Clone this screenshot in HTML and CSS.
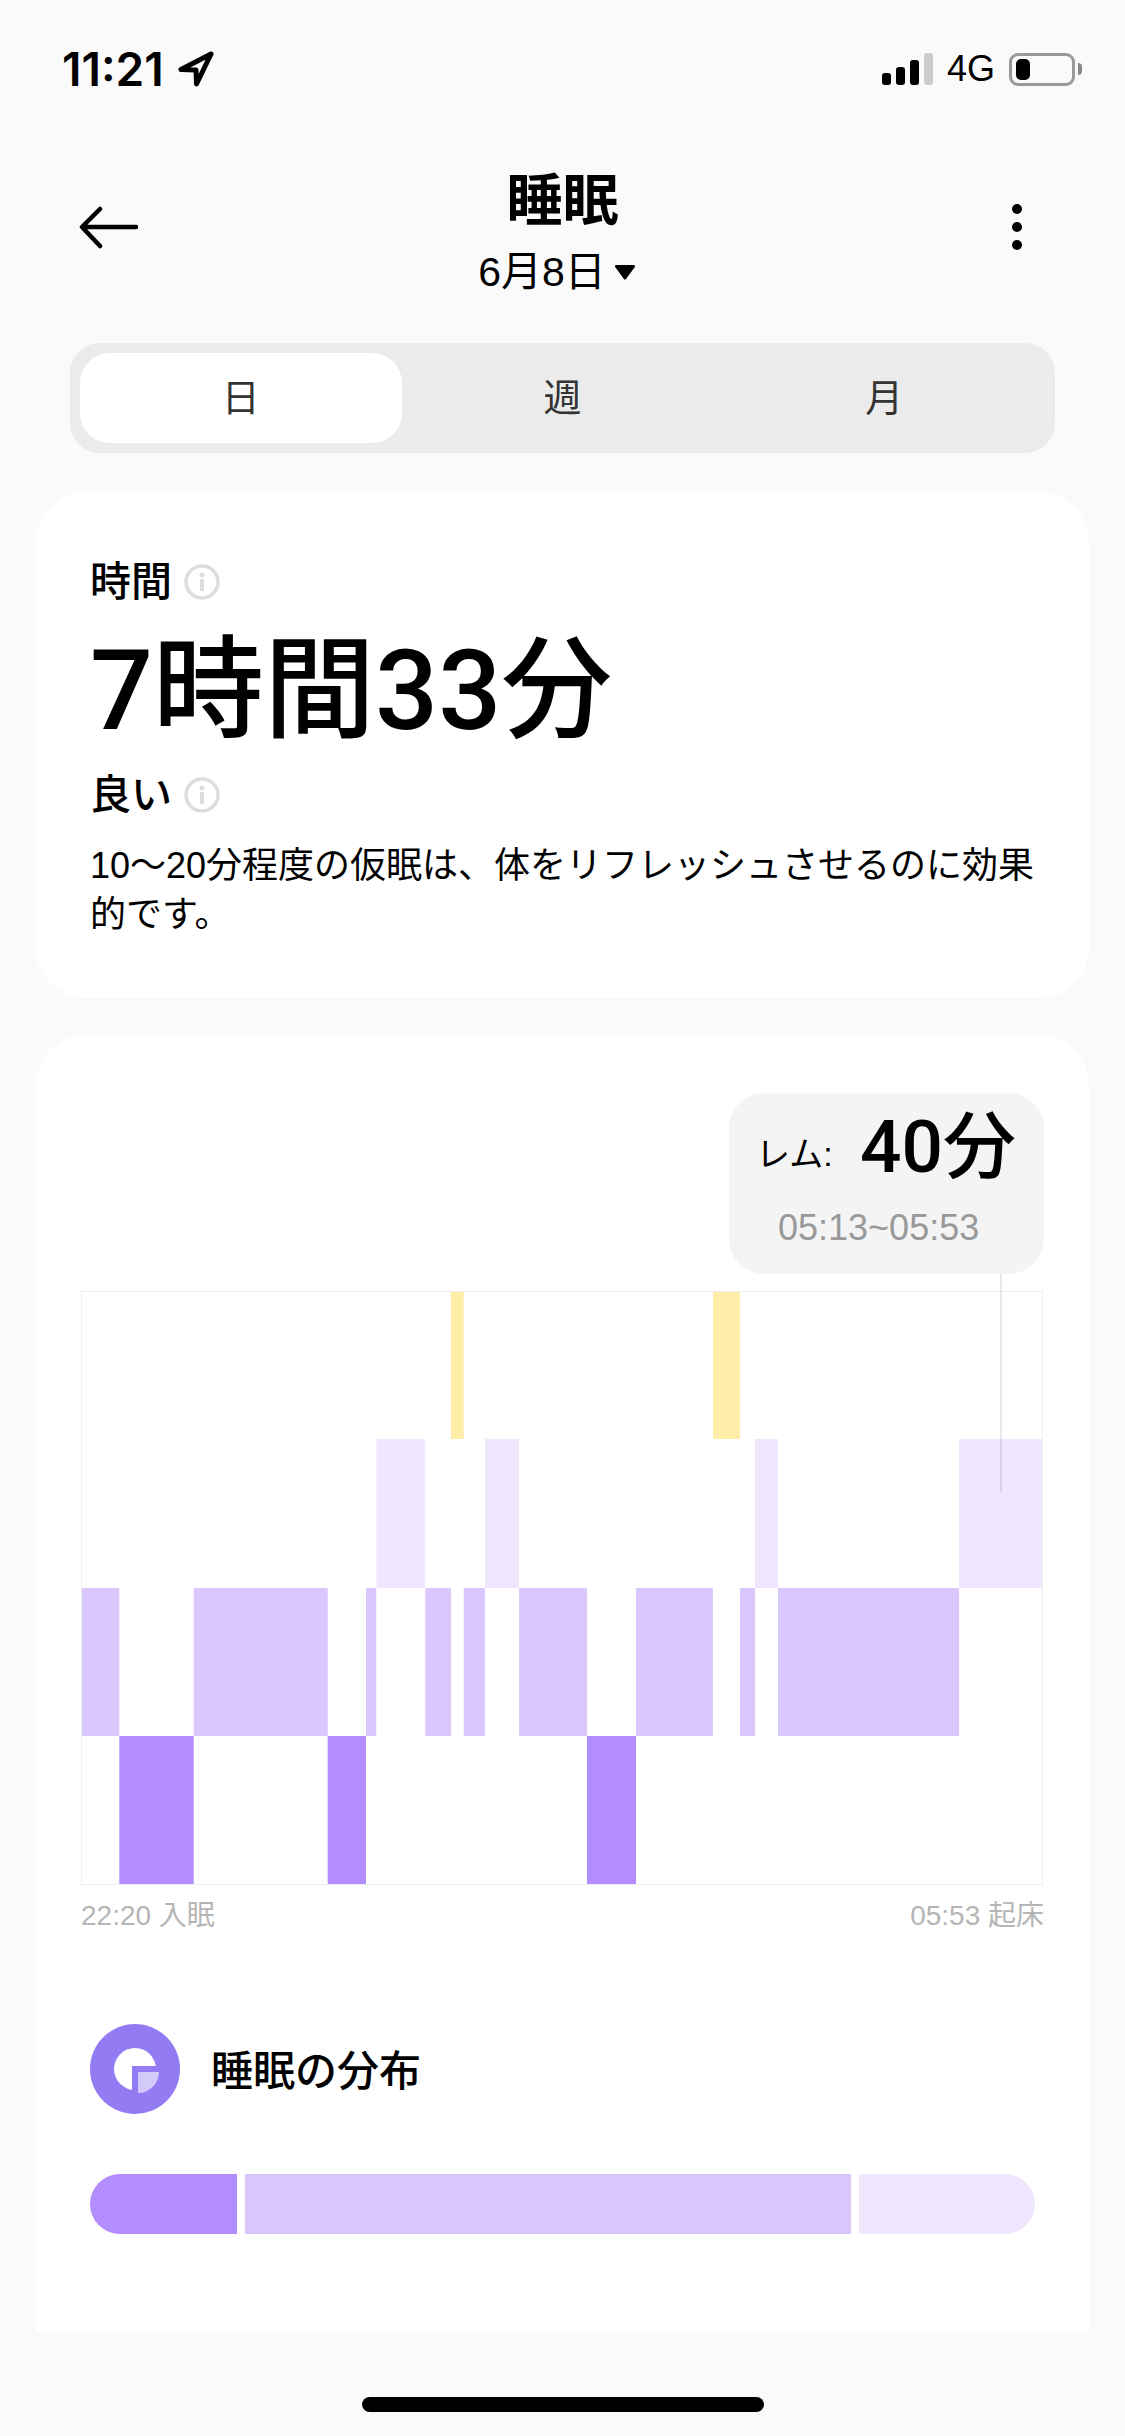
FILE: index.html
```html
<!DOCTYPE html>
<html lang="ja">
<head>
    <meta charset="UTF-8">
    <meta name="viewport" content="width=device-width, initial-scale=1.0">
    <title>睡眠</title>
    <link rel="stylesheet" href="styles.css">
</head>
<body>

    <div class="status-bar">
        <div class="status-left">
            <span class="clock">11:21</span>
            <svg class="location" width="38" height="38" viewBox="0 0 38 38">
                <path d="M34 4 L4 19.500 L19 20 L19.500 34 Z" fill="none" stroke="#000" stroke-width="5" stroke-linejoin="round"/>
            </svg>
        </div>
        <div class="status-right">
            <div class="signal">
                <span class="signal-bar bar-1"></span>
                <span class="signal-bar bar-2"></span>
                <span class="signal-bar bar-3"></span>
                <span class="signal-bar bar-4"></span>
            </div>
            <span class="network">4G</span>
            <div class="battery"><span class="battery-fill"></span></div>
            <span class="battery-cap"></span>
        </div>
    </div>

    <div class="nav">
        <svg class="nav-back" width="60" height="44" viewBox="0 0 60 44">
            <path d="M58 21 H5 M22 3 L4 21 L22 40" fill="none" stroke="#000" stroke-width="4.500" stroke-linecap="round" stroke-linejoin="round"/>
        </svg>
        <div class="nav-center">
            <h1>睡眠</h1>
            <div class="nav-date">
                <span>6月8日</span>
                <svg width="22" height="15" viewBox="0 0 20 14"><path d="M2 0 H18 Q20 0 19 2 L11 13 Q10 14 9 13 L1 2 Q0 0 2 0 Z" fill="#000"/></svg>
            </div>
        </div>
        <div class="nav-more">
            <span></span>
            <span></span>
            <span></span>
        </div>
    </div>

    <div class="tabs">
        <div class="tab active">日</div>
        <div class="tab">週</div>
        <div class="tab">月</div>
    </div>

    <div class="card summary">
        <div class="label-row">
            <span>時間</span>
            <svg class="info" width="36" height="36" viewBox="0 0 36 36">
                <circle cx="18" cy="18" r="16" fill="none" stroke="#ddd" stroke-width="3.500"/>
                <circle cx="18" cy="11" r="2.500" fill="#ddd"/>
                <rect x="16" y="15" width="4" height="12" fill="#ddd"/>
            </svg>
        </div>
        <div class="duration">7時間33分</div>
        <div class="label-row quality">
            <span>良い</span>
            <svg class="info" width="36" height="36" viewBox="0 0 36 36">
                <circle cx="18" cy="18" r="16" fill="none" stroke="#ddd" stroke-width="3.500"/>
                <circle cx="18" cy="11" r="2.500" fill="#ddd"/>
                <rect x="16" y="15" width="4" height="12" fill="#ddd"/>
            </svg>
        </div>
        <p class="advice">10～20分程度の仮眠は、体をリフレッシュさせるのに効果的です。</p>
    </div>

    <div class="card sleep-chart">
        <div class="tooltip-wrap">
            <div class="tooltip">
                <div class="tooltip-main">
                    <span class="tooltip-stage">レム:</span>
                    <span class="tooltip-value">40分</span>
                </div>
                <div class="tooltip-time">05:13~05:53</div>
            </div>
        </div>

        <svg class="hypnogram" width="962" height="594" viewBox="81 1291 962 594">
            <g fill="#ffeda8">
                <rect x="451" y="1291" width="12.700" height="148"/>
                <rect x="713" y="1291" width="27" height="148"/>
            </g>
            <g fill="#f0e7fe">
                <rect x="376.300" y="1439" width="49" height="149"/>
                <rect x="485" y="1439" width="34" height="149"/>
                <rect x="755" y="1439" width="23" height="149"/>
                <rect x="959" y="1439" width="84" height="149"/>
            </g>
            <g fill="#d9c7fe">
                <rect x="81" y="1588" width="38.300" height="148"/>
                <rect x="193.700" y="1588" width="134" height="148"/>
                <rect x="366" y="1588" width="10.300" height="148"/>
                <rect x="425.300" y="1588" width="25.700" height="148"/>
                <rect x="463.700" y="1588" width="21.300" height="148"/>
                <rect x="519" y="1588" width="68" height="148"/>
                <rect x="636" y="1588" width="77" height="148"/>
                <rect x="740" y="1588" width="15" height="148"/>
                <rect x="778" y="1588" width="181" height="148"/>
            </g>
            <g fill="#b38dfe">
                <rect x="119.300" y="1736" width="74.400" height="149"/>
                <rect x="327.700" y="1736" width="38.300" height="149"/>
                <rect x="587" y="1736" width="49" height="149"/>
            </g>
        </svg>

        <div class="chart-labels">
            <span>22:20 入眠</span>
            <span>05:53 起床</span>
        </div>

        <div class="section-head">
            <svg width="90" height="90" viewBox="0 0 90 90">
                <circle cx="45" cy="45" r="45" fill="#927bf3"/>
                <circle cx="45" cy="45" r="21" fill="#fff"/>
                <rect x="42" y="42" width="30" height="30" fill="#927bf3"/>
                <path d="M48 48 H69 A21 21 0 0 1 48 69 Z" fill="#d4cafa"/>
            </svg>
            <h2>睡眠の分布</h2>
        </div>

        <div class="stage-bar">
            <div class="stage stage-deep"></div>
            <div class="stage stage-mid"></div>
            <div class="stage stage-light"></div>
        </div>
    </div>

    <div class="home-indicator"></div>

</body>
</html>
```

FILE: styles.css
```css
body {
    font-family: 'Liberation Sans', 'Noto Sans CJK JP', sans-serif;
    margin: 0;
    padding: 0;
    background-color: #fafafa;
    color: #000;
}
.status-bar {
    height: 138px;
    box-sizing: border-box;
    padding: 0 43px 0 62px;
    display: flex;
    align-items: center;
    justify-content: space-between;
}
.status-left {
    display: flex;
    align-items: center;
    gap: 13px;
}
.clock {
    font-family: 'Inter', sans-serif;
    font-weight: 600;
    font-size: 46px;
}
.status-right {
    display: flex;
    align-items: center;
}
.signal {
    display: flex;
    align-items: flex-end;
    gap: 5px;
    height: 32px;
}
.signal-bar {
    width: 9px;
    background-color: #000;
    border-radius: 3px;
}
.bar-1 { height: 12px; }
.bar-2 { height: 18px; }
.bar-3 { height: 25px; }
.bar-4 { height: 32px; background-color: #ccc; }
.network {
    font-size: 36px;
    margin: 0 14px;
}
.battery {
    width: 66px;
    height: 33px;
    box-sizing: border-box;
    border: 3px solid #999;
    border-radius: 9px;
    padding: 3px 4px;
}
.battery-fill {
    display: block;
    width: 14px;
    height: 100%;
    background-color: #000;
    border-radius: 5px;
}
.battery-cap {
    width: 4px;
    height: 12px;
    margin-left: 3px;
    background-color: #888;
    border-radius: 0 6px 6px 0;
}

.nav {
    display: grid;
    grid-template-columns: 1fr auto 1fr;
    align-items: center;
    padding: 30px 78px 0;
}
.nav-back {
    margin-top: -8px;
}
.nav-center {
    text-align: center;
}
.nav h1 {
    margin: 0;
    font-size: 56px;
    line-height: 66px;
    font-weight: bold;
}
.nav-date {
    margin: 14px 11px 0 0;
    font-size: 41px;
    line-height: 48px;
    display: flex;
    align-items: center;
    justify-content: center;
    gap: 8px;
}
.nav-more {
    justify-self: end;
    margin: -10px 25px 0 0;
    display: flex;
    flex-direction: column;
    gap: 8px;
}
.nav-more span {
    width: 10px;
    height: 10px;
    border-radius: 50%;
    background-color: #000;
}

.tabs {
    margin: 47px 70px 0;
    height: 110px;
    box-sizing: border-box;
    padding: 10px;
    background-color: #ebebeb;
    border-radius: 30px;
    display: grid;
    grid-template-columns: repeat(3, 1fr);
}
.tab {
    display: flex;
    align-items: center;
    justify-content: center;
    padding-bottom: 8px;
    font-size: 38px;
    color: #333;
    border-radius: 30px;
}
.tab.active {
    background-color: #fff;
}

.card {
    background-color: #fff;
    margin: 0 36px;
}
.summary {
    margin-top: 39px;
    height: 506px;
    box-sizing: border-box;
    padding: 64px 40px 0 54px;
    border-radius: 50px;
}
.label-row {
    display: flex;
    align-items: center;
    gap: 12px;
    font-size: 41px;
    line-height: 52px;
    font-weight: 500;
}
.quality {
    margin-top: 18px;
}
.duration {
    margin-top: 23px;
    font-family: 'Roboto', 'Noto Sans CJK JP', sans-serif;
    font-size: 111px;
    line-height: 120px;
    font-weight: 500;
}
.advice {
    margin: 20px 0 0;
    font-size: 36px;
    line-height: 49px;
}

.sleep-chart {
    margin-top: 37px;
    padding: 58px 45px 99px;
    border-radius: 50px 50px 0 0;
}
.tooltip-wrap {
    display: flex;
    justify-content: flex-end;
}
.tooltip {
    position: relative;
    width: 315px;
    height: 181px;
    box-sizing: border-box;
    padding: 18px 0 0 27px;
    background-color: #f4f4f4;
    border-radius: 35px;
}
/* pointer line running down into the chart */
.tooltip::after {
    content: '';
    position: absolute;
    top: 100%;
    right: 42px;
    width: 2px;
    height: 218px;
    background-color: rgba(60, 50, 90, 0.12);
}
.tooltip-main {
    display: flex;
    align-items: center;
    height: 72px;
}
.tooltip-stage {
    font-size: 34px;
    margin-top: 8px;
    width: 104px;
}
.tooltip-value {
    font-family: 'Roboto', 'Noto Sans CJK JP', sans-serif;
    font-size: 73px;
    line-height: 72px;
    font-weight: 500;
}
.tooltip-time {
    margin: 23px 0 0 22px;
    font-size: 36px;
    line-height: 44px;
    color: #999;
}

.hypnogram {
    display: block;
    margin-top: 17px;
    outline: 1px solid #eee;
    outline-offset: -1px;
}
.chart-labels {
    margin-top: 15px;
    display: flex;
    justify-content: space-between;
    font-size: 28px;
    line-height: 32px;
    color: #b5b5b5;
}

.section-head {
    margin: 92px 9px 0;
    display: flex;
    align-items: center;
    gap: 31px;
}
.section-head h2 {
    margin: 0 0 3px;
    font-size: 42px;
    font-weight: 500;
}
.stage-bar {
    margin: 60px 9px 0;
    height: 60px;
    border-radius: 30px;
    overflow: hidden;
    display: flex;
    gap: 8px;
}
.stage-deep {
    width: 147px;
    background-color: #b38dfe;
}
.stage-mid {
    flex: 1;
    background-color: #d9c7fe;
}
.stage-light {
    width: 176px;
    background-color: #f0e7fe;
}

.home-indicator {
    width: 402px;
    height: 15px;
    margin: 64px auto 0;
    background-color: #000;
    border-radius: 8px;
}
```
